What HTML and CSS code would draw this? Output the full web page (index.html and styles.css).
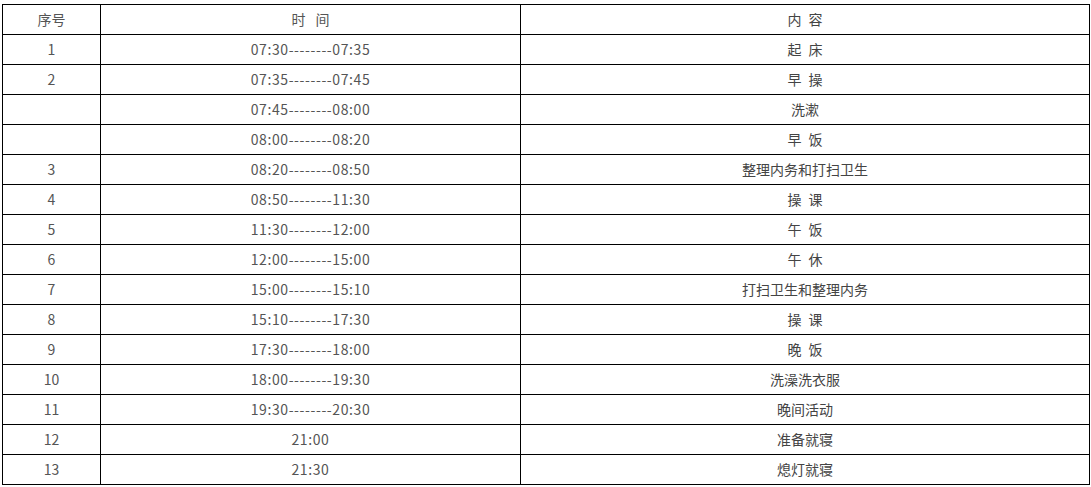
FILE: index.html
```html
<!DOCTYPE html>
<html lang="zh">
<head>
<meta charset="utf-8">
<title>作息时间表</title>
<link rel="stylesheet" href="styles.css">
</head>
<body>
<table class="schedule">
  <colgroup>
    <col class="c-no">
    <col class="c-time">
    <col class="c-content">
  </colgroup>
  <tr><td>序号</td><td>时&ensp; 间</td><td class="txt">内&ensp;容</td></tr>
  <tr><td>1</td><td class="time">07:30--------07:35</td><td class="txt">起&ensp;床</td></tr>
  <tr><td>2</td><td class="time">07:35--------07:45</td><td class="txt">早&ensp;操</td></tr>
  <tr><td></td><td class="time">07:45--------08:00</td><td class="txt">洗漱</td></tr>
  <tr><td></td><td class="time">08:00--------08:20</td><td class="txt">早&ensp;饭</td></tr>
  <tr><td>3</td><td class="time">08:20--------08:50</td><td class="txt">整理内务和打扫卫生</td></tr>
  <tr><td>4</td><td class="time">08:50--------11:30</td><td class="txt">操&ensp;课</td></tr>
  <tr><td>5</td><td class="time">11:30--------12:00</td><td class="txt">午&ensp;饭</td></tr>
  <tr><td>6</td><td class="time">12:00--------15:00</td><td class="txt">午&ensp;休</td></tr>
  <tr><td>7</td><td class="time">15:00--------15:10</td><td class="txt">打扫卫生和整理内务</td></tr>
  <tr><td>8</td><td class="time">15:10--------17:30</td><td class="txt">操&ensp;课</td></tr>
  <tr><td>9</td><td class="time">17:30--------18:00</td><td class="txt">晚&ensp;饭</td></tr>
  <tr><td>10</td><td class="time">18:00--------19:30</td><td class="txt">洗澡洗衣服</td></tr>
  <tr><td>11</td><td class="time">19:30--------20:30</td><td class="txt">晚间活动</td></tr>
  <tr><td>12</td><td class="time">21:00</td><td class="txt">准备就寝</td></tr>
  <tr><td>13</td><td class="time">21:30</td><td class="txt">熄灯就寝</td></tr>
</table>
</body>
</html>
```
FILE: styles.css
```css
html, body {
  margin: 0;
  padding: 0;
  background: #fff;
}
body {
  padding: 4px 0 0 2px;
  font-family: "Noto Sans CJK SC", "Noto Sans", sans-serif;
  font-size: 14px;
  color: #555;
}
.schedule {
  border-collapse: collapse;
  table-layout: fixed;
  width: 1087px;
}
.c-no { width: 98px; }
.c-time { width: 420px; }
.c-content { width: 569px; }
.schedule td {
  border: 1px solid #000;
  height: 28px;
  padding: 0 0 1px;
  text-align: center;
  vertical-align: middle;
  line-height: 20px;
}
.schedule td.time {
  letter-spacing: 0.6px;
}
.schedule td.txt {
  color: #444;
}
```
